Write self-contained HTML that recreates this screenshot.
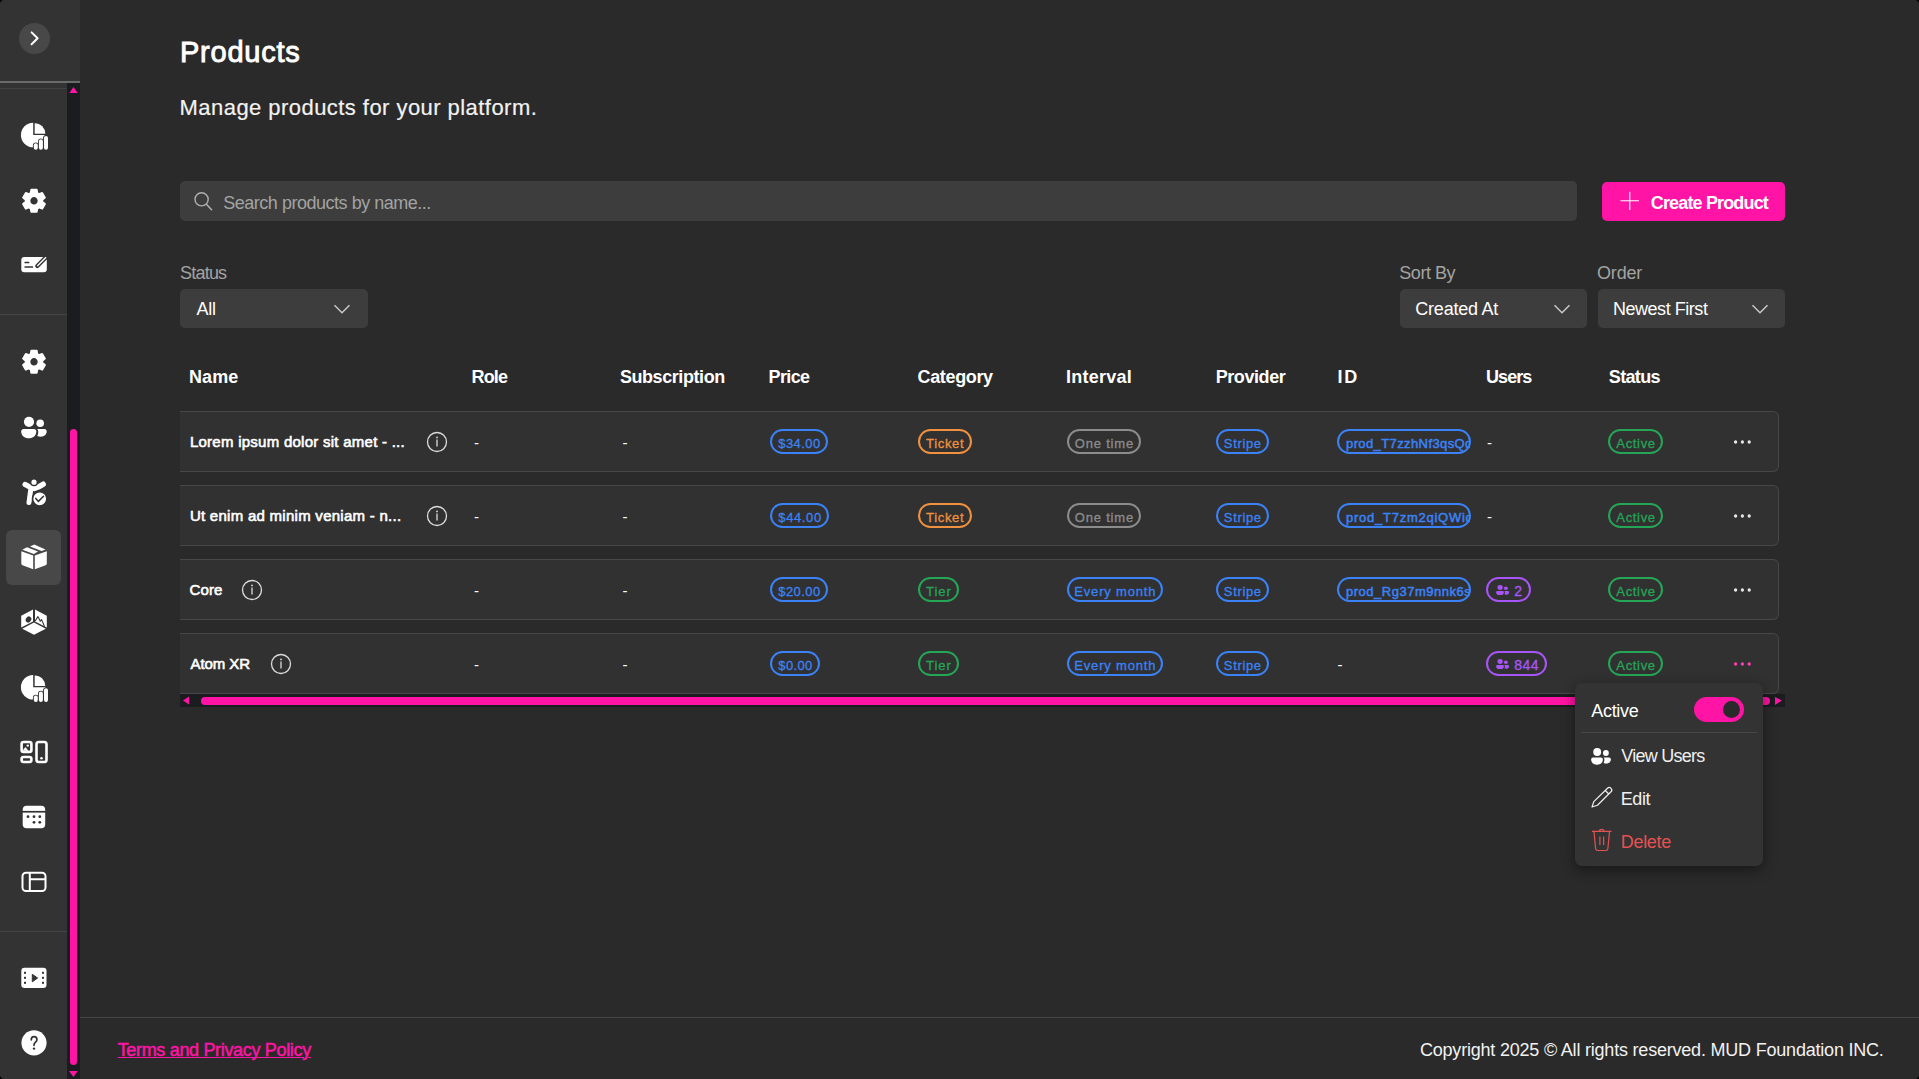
<!DOCTYPE html>
<html><head><meta charset="utf-8"><title>Products</title>
<style>
html,body{margin:0;padding:0;width:1919px;height:1079px;overflow:hidden;background:#2a2a2a;}
body{position:relative;font-family:"Liberation Sans", sans-serif;}
.t{position:absolute;white-space:nowrap;}
</style></head><body>
<div style="position:absolute;left:0px;top:0px;width:80px;height:1079px;background:#333333"></div>
<div style="position:absolute;left:80px;top:1016.5px;width:1839px;height:1px;background:#444"></div>
<div style="position:absolute;left:0px;top:81px;width:80px;height:2px;background:#6b6b6b"></div>
<div style="position:absolute;left:0px;top:88px;width:67px;height:1px;background:#444"></div>
<div style="position:absolute;left:0px;top:314px;width:67px;height:1px;background:#444"></div>
<div style="position:absolute;left:0px;top:931px;width:67px;height:1px;background:#444"></div>
<div style="position:absolute;left:67px;top:83px;width:13px;height:996px;background:#1b1c1f"></div>
<div style="position:absolute;left:70px;top:428.5px;width:7px;height:636px;background:#ff14a5;border-radius:3.5px"></div>
<div style="position:absolute;left:6px;top:530px;width:55px;height:55px;background:#484848;border-radius:6px"></div>
<div style="position:absolute;left:19px;top:23px;width:31px;height:31px;background:#484848;border-radius:50%"></div>
<svg style="position:absolute;left:0;top:0" width="80" height="1079" viewBox="0 0 80 1079"><path d="M31.6,32.4 L37.6,38.3 L31.6,44.2" fill="none" stroke="#fff" stroke-width="2" stroke-linecap="round" stroke-linejoin="round"/><path d="M73.5,86.9 L77.7,92.9 L69.4,92.9 Z" fill="#ff14a5"/><path d="M69,1070.9 L77.8,1070.9 L73.4,1077.1 Z" fill="#ff14a5"/><path d="M33.2,122.7 A12.3,12.3 0 1 0 45.5,135 L33.2,135 Z" fill="#fff"/><path d="M34.7,123.20000000000002 A10.6,10.6 0 0 1 45.300000000000004,133.8 L34.7,133.8 Z" fill="#fff"/><rect x="33.8" y="143.3" width="4" height="6.5" rx="2" fill="#fff" stroke="#333333" stroke-width="1.8" paint-order="stroke"/><rect x="38.9" y="139.3" width="4" height="10.5" rx="2" fill="#fff" stroke="#333333" stroke-width="1.8" paint-order="stroke"/><rect x="44" y="136" width="4" height="13.8" rx="2" fill="#fff" stroke="#333333" stroke-width="1.8" paint-order="stroke"/><path fill-rule="evenodd" d="M29.80,193.53 L30.72,193.07 L31.24,189.74 L36.76,189.74 L37.28,193.07 L38.20,193.53 L38.20,193.53 L39.06,194.09 L42.20,192.88 L44.96,197.66 L42.34,199.78 L42.40,200.80 L42.40,200.80 L42.34,201.82 L44.96,203.94 L42.20,208.72 L39.06,207.51 L38.20,208.07 L38.20,208.07 L37.28,208.53 L36.76,211.86 L31.24,211.86 L30.72,208.53 L29.80,208.07 L29.80,208.07 L28.94,207.51 L25.80,208.72 L23.04,203.94 L25.66,201.82 L25.60,200.80 L25.60,200.80 L25.66,199.78 L23.04,197.66 L25.80,192.88 L28.94,194.09 L29.80,193.53 Z M38.60,200.80 A4.6,4.6 0 1 0 29.40,200.80 A4.6,4.6 0 1 0 38.60,200.80 Z" fill="#fff" stroke="#fff" stroke-width="1.8" stroke-linejoin="round"/><rect x="21.3" y="257" width="25.5" height="15.3" rx="3" fill="#fff"/><path d="M25.2,262.5 H28.6 M25.2,267 H32.4" stroke="#333333" stroke-width="1.7" stroke-linecap="round"/><path d="M37.3,265.9 L46,257.3" stroke="#333333" stroke-width="4.2" stroke-linecap="round"/><path d="M37.3,265.9 L46,257.3" stroke="#fff" stroke-width="1.4" stroke-linecap="butt"/><path fill-rule="evenodd" d="M29.80,354.53 L30.72,354.07 L31.24,350.74 L36.76,350.74 L37.28,354.07 L38.20,354.53 L38.20,354.53 L39.06,355.09 L42.20,353.88 L44.96,358.66 L42.34,360.78 L42.40,361.80 L42.40,361.80 L42.34,362.82 L44.96,364.94 L42.20,369.72 L39.06,368.51 L38.20,369.07 L38.20,369.07 L37.28,369.53 L36.76,372.86 L31.24,372.86 L30.72,369.53 L29.80,369.07 L29.80,369.07 L28.94,368.51 L25.80,369.72 L23.04,364.94 L25.66,362.82 L25.60,361.80 L25.60,361.80 L25.66,360.78 L23.04,358.66 L25.80,353.88 L28.94,355.09 L29.80,354.53 Z M38.60,361.80 A4.6,4.6 0 1 0 29.40,361.80 A4.6,4.6 0 1 0 38.60,361.80 Z" fill="#fff" stroke="#fff" stroke-width="1.8" stroke-linejoin="round"/><g transform="translate(21,416.5) scale(1.0)" fill="#fff"><circle cx="8" cy="5.3" r="5.1"/><circle cx="19.2" cy="6.7" r="3.8"/><path d="M0.2,15 Q0.2,12.5 2.7,12.5 H12.8 Q15.3,12.5 15.3,15 C15.3,19 12,21.8 7.75,21.8 C3.5,21.8 0.2,19 0.2,15 Z"/><path d="M16.2,12.5 H23.2 Q25.7,12.5 25.7,15 C25.7,18 23,20.2 20,20.2 C18.5,20.2 17.3,19.9 16.3,19.4 Q17.3,17.5 17.3,15.5 Q17.3,13.7 16.2,12.5 Z"/></g><path d="M25.2,484.5 Q30,487.5 34,488.5 Q38.5,487.5 43.2,484.2" fill="none" stroke="#fff" stroke-width="5.4" stroke-linecap="round"/><path d="M30.8,489 L29,502.5" fill="none" stroke="#fff" stroke-width="5" stroke-linecap="round"/><circle cx="34" cy="482.2" r="3.3" fill="#fff" stroke="#333333" stroke-width="1.4"/><circle cx="39.7" cy="498.8" r="7.2" fill="#fff" stroke="#333333" stroke-width="1.6"/><path d="M35.8,498.4 L38.4,501.4 L43.5,496.2" fill="none" stroke="#333333" stroke-width="1.5" stroke-linecap="round" stroke-linejoin="round"/><path d="M21.3,551.2 L33.2,555.4 L33.2,569.3 L22.5,565.2 Q21.3,564.6 21.3,563.4 Z" fill="#fff"/><path d="M34.8,555.4 L46.8,551.2 L46.8,563.4 Q46.8,564.6 45.6,565.2 L34.8,569.3 Z" fill="#fff"/><path d="M22.3,549.7 L27,547.2 L38,551.6 L33.8,554 Z" fill="#fff"/><path d="M30,546.6 L33.8,544.7 Q34.3,544.5 34.8,544.7 L45.5,549.6 L41.6,551.1 Z" fill="#fff"/><path d="M21.2,615.8 L33,609.6 L33,621.4 L21.2,627.4 Z" fill="#fff"/><path d="M35,609.6 L46.8,615.8 L46.8,627.4 L35,621.4 Z" fill="#fff"/><path d="M22.2,628.7 L34,622.6 L45.8,628.7 L34,634.8 Z" fill="#fff"/><ellipse cx="28.5" cy="619.5" rx="2.6" ry="3.2" transform="rotate(35 28.5 619.5)" fill="#333333"/><path d="M35.2,621 L37.9,616.6 L40.3,621.2 L41.6,619.6 L44.6,626.6" fill="none" stroke="#333333" stroke-width="1.1" stroke-linejoin="round"/><path d="M33.2,675.0 A12.3,12.3 0 1 0 45.5,687.3 L33.2,687.3 Z" fill="#fff"/><path d="M34.7,675.4999999999999 A10.6,10.6 0 0 1 45.300000000000004,686.0999999999999 L34.7,686.0999999999999 Z" fill="#fff"/><rect x="33.8" y="695.5999999999999" width="4" height="6.5" rx="2" fill="#fff" stroke="#333333" stroke-width="1.8" paint-order="stroke"/><rect x="38.9" y="691.5999999999999" width="4" height="10.5" rx="2" fill="#fff" stroke="#333333" stroke-width="1.8" paint-order="stroke"/><rect x="44" y="688.3" width="4" height="13.8" rx="2" fill="#fff" stroke="#333333" stroke-width="1.8" paint-order="stroke"/><rect x="21.6" y="742" width="9.8" height="9.9" rx="2" fill="none" stroke="#fff" stroke-width="2.6"/><path d="M22.5,750.5 L25.5,747 L28.5,751 Z" fill="#fff"/><circle cx="27.8" cy="745.6" r="1.2" fill="#fff"/><rect x="21.6" y="757" width="9.8" height="5" rx="2" fill="none" stroke="#fff" stroke-width="2.6"/><rect x="36.5" y="742" width="10" height="20" rx="2.2" fill="none" stroke="#fff" stroke-width="2.6"/><circle cx="41.5" cy="758.2" r="1.3" fill="#fff"/><rect x="22.7" y="805.7" width="22.5" height="22.6" rx="4" fill="#fff"/><rect x="22" y="810.9" width="24" height="1.7" fill="#333333"/><circle cx="28" cy="816.7" r="1.4" fill="#333333"/><circle cx="34" cy="816.7" r="1.4" fill="#333333"/><circle cx="39.8" cy="816.7" r="1.4" fill="#333333"/><circle cx="34" cy="822.3" r="1.4" fill="#333333"/><circle cx="39.8" cy="822.3" r="1.4" fill="#333333"/><rect x="22.5" y="872.8" width="23" height="18.2" rx="3.5" fill="none" stroke="#fff" stroke-width="2"/><path d="M29.8,872.8 V891 M29.8,879.2 H45.5" stroke="#fff" stroke-width="2"/><rect x="21.3" y="967.8" width="25.2" height="20.2" rx="3.2" fill="#fff"/><rect x="24" y="971.8" width="2" height="2" fill="#333333"/><rect x="24" y="976.8" width="2" height="2" fill="#333333"/><rect x="24" y="981.8" width="2" height="2" fill="#333333"/><rect x="42" y="971.8" width="2" height="2" fill="#333333"/><rect x="42" y="976.8" width="2" height="2" fill="#333333"/><rect x="42" y="981.8" width="2" height="2" fill="#333333"/><path d="M32.3,974.3 L37.6,978 L32.3,981.8 Z" fill="#333333" stroke="#333333" stroke-width="1" stroke-linejoin="round"/><circle cx="34" cy="1042.8" r="12.6" fill="#fff"/><path d="M31.3,1039.8 Q31.3,1036.6 34,1036.6 Q36.9,1036.6 36.9,1039.4 Q36.9,1041 35.3,1042.3 Q34,1043.4 34,1045.3" fill="none" stroke="#333333" stroke-width="1.7" stroke-linecap="round"/><circle cx="34" cy="1048.6" r="1.2" fill="#333333"/></svg>
<div class="t" style="left:180.00px;top:38.25px;font-size:29px;line-height:29px;-webkit-text-stroke:0.9px #ffffff;color:#ffffff;letter-spacing:0.764px;">Products</div>
<div class="t" style="left:179.55px;top:96.68px;font-size:22px;line-height:22px;-webkit-text-stroke:0.2px #f2f2f2;color:#f2f2f2;letter-spacing:0.450px;">Manage products for your platform.</div>
<div style="position:absolute;left:180px;top:181px;width:1397px;height:40px;background:#3d3d3d;border-radius:5px"></div>
<svg style="position:absolute;left:190px;top:188px" width="26" height="26" viewBox="0 0 26 26"><circle cx="11.6" cy="11.3" r="6.6" fill="none" stroke="#b0b0b0" stroke-width="1.4"/><path d="M16.4,16.2 L21.6,21.7" stroke="#b0b0b0" stroke-width="1.5" stroke-linecap="round"/></svg>
<div class="t" style="left:223.25px;top:193.86px;font-size:18px;line-height:18px;color:#a3a3a3;letter-spacing:-0.480px;">Search products by name...</div>
<div style="position:absolute;left:1602px;top:182px;width:183px;height:39px;background:#ff14a5;border-radius:5px"></div>
<svg style="position:absolute;left:1618px;top:190px" width="24" height="24" viewBox="0 0 24 24"><path d="M11.8,1.7 V19.9 M2.5,10.8 H21" stroke="#fff" stroke-width="1.1"/></svg>
<div class="t" style="left:1650.80px;top:193.66px;font-size:18px;line-height:18px;font-weight:700;color:#ffffff;letter-spacing:-0.846px;">Create Product</div>
<div class="t" style="left:179.95px;top:263.76px;font-size:18px;line-height:18px;color:#a3a3a3;letter-spacing:-0.770px;">Status</div>
<div class="t" style="left:1399.35px;top:263.76px;font-size:18px;line-height:18px;color:#a3a3a3;letter-spacing:-0.475px;">Sort By</div>
<div class="t" style="left:1597.05px;top:263.76px;font-size:18px;line-height:18px;color:#a3a3a3;letter-spacing:-0.200px;">Order</div>
<div style="position:absolute;left:180px;top:289px;width:188px;height:39px;background:#3d3d3d;border-radius:5px"></div>
<div class="t" style="left:196.40px;top:300.16px;font-size:18px;line-height:18px;color:#ffffff;letter-spacing:-0.150px;">All</div>
<svg style="position:absolute;left:332.5px;top:300px" width="20" height="20" viewBox="0 0 20 20"><path d="M1.5,5.2 L9,12.8 L16.5,5.2" fill="none" stroke="#c8c8c8" stroke-width="1.5"/></svg>
<div style="position:absolute;left:1400px;top:289px;width:187px;height:39px;background:#3d3d3d;border-radius:5px"></div>
<div class="t" style="left:1415.35px;top:300.16px;font-size:18px;line-height:18px;color:#ffffff;letter-spacing:-0.239px;">Created At</div>
<svg style="position:absolute;left:1553px;top:300px" width="20" height="20" viewBox="0 0 20 20"><path d="M1.5,5.2 L9,12.8 L16.5,5.2" fill="none" stroke="#c8c8c8" stroke-width="1.5"/></svg>
<div style="position:absolute;left:1598px;top:289px;width:187px;height:39px;background:#3d3d3d;border-radius:5px"></div>
<div class="t" style="left:1612.95px;top:300.16px;font-size:18px;line-height:18px;color:#ffffff;letter-spacing:-0.459px;">Newest First</div>
<svg style="position:absolute;left:1751px;top:300px" width="20" height="20" viewBox="0 0 20 20"><path d="M1.5,5.2 L9,12.8 L16.5,5.2" fill="none" stroke="#c8c8c8" stroke-width="1.5"/></svg>
<div class="t" style="left:189.00px;top:367.86px;font-size:18px;line-height:18px;font-weight:700;color:#ffffff;letter-spacing:0.100px;">Name</div>
<div class="t" style="left:471.50px;top:367.86px;font-size:18px;line-height:18px;font-weight:700;color:#ffffff;letter-spacing:-0.833px;">Role</div>
<div class="t" style="left:619.90px;top:367.86px;font-size:18px;line-height:18px;font-weight:700;color:#ffffff;letter-spacing:-0.427px;">Subscription</div>
<div class="t" style="left:768.60px;top:367.86px;font-size:18px;line-height:18px;font-weight:700;color:#ffffff;letter-spacing:-0.625px;">Price</div>
<div class="t" style="left:917.50px;top:367.86px;font-size:18px;line-height:18px;font-weight:700;color:#ffffff;letter-spacing:-0.343px;">Category</div>
<div class="t" style="left:1066.10px;top:367.86px;font-size:18px;line-height:18px;font-weight:700;color:#ffffff;letter-spacing:0.221px;">Interval</div>
<div class="t" style="left:1215.70px;top:367.86px;font-size:18px;line-height:18px;font-weight:700;color:#ffffff;letter-spacing:-0.421px;">Provider</div>
<div class="t" style="left:1337.50px;top:367.86px;font-size:18px;line-height:18px;font-weight:700;color:#ffffff;letter-spacing:1.850px;">ID</div>
<div class="t" style="left:1486.10px;top:367.86px;font-size:18px;line-height:18px;font-weight:700;color:#ffffff;letter-spacing:-0.975px;">Users</div>
<div class="t" style="left:1608.80px;top:367.86px;font-size:18px;line-height:18px;font-weight:700;color:#ffffff;letter-spacing:-0.660px;">Status</div>
<div style="position:absolute;left:180px;top:411px;width:1598px;height:59px;background:#313131;border-top:1px solid #474747;border-bottom:1px solid #474747;border-right:1px solid #474747;border-radius:0 6px 6px 0"></div>
<div class="t" style="left:189.90px;top:434.10px;font-size:15px;line-height:15px;-webkit-text-stroke:0.6px #ffffff;color:#ffffff;letter-spacing:0.261px;">Lorem ipsum dolor sit amet - ...</div>
<svg style="position:absolute;left:426.2px;top:430.5px" width="22" height="22" viewBox="0 0 22 22"><circle cx="11" cy="11" r="9.5" fill="none" stroke="#dcdcdc" stroke-width="1.3"/><path d="M11,8.6 V15.6" stroke="#dcdcdc" stroke-width="1.3"/><circle cx="11" cy="6.4" r="0.9" fill="#dcdcdc"/></svg>
<div class="t" style="left:474.00px;top:434.90px;font-size:15px;line-height:15px;color:#ffffff;letter-spacing:0.000px;">-</div>
<div class="t" style="left:622.50px;top:434.90px;font-size:15px;line-height:15px;color:#ffffff;letter-spacing:0.000px;">-</div>
<div style="position:absolute;left:180px;top:485px;width:1598px;height:59px;background:#313131;border-top:1px solid #474747;border-bottom:1px solid #474747;border-right:1px solid #474747;border-radius:0 6px 6px 0"></div>
<div class="t" style="left:189.90px;top:508.10px;font-size:15px;line-height:15px;-webkit-text-stroke:0.6px #ffffff;color:#ffffff;letter-spacing:0.271px;">Ut enim ad minim veniam - n...</div>
<svg style="position:absolute;left:426.2px;top:504.5px" width="22" height="22" viewBox="0 0 22 22"><circle cx="11" cy="11" r="9.5" fill="none" stroke="#dcdcdc" stroke-width="1.3"/><path d="M11,8.6 V15.6" stroke="#dcdcdc" stroke-width="1.3"/><circle cx="11" cy="6.4" r="0.9" fill="#dcdcdc"/></svg>
<div class="t" style="left:474.00px;top:508.90px;font-size:15px;line-height:15px;color:#ffffff;letter-spacing:0.000px;">-</div>
<div class="t" style="left:622.50px;top:508.90px;font-size:15px;line-height:15px;color:#ffffff;letter-spacing:0.000px;">-</div>
<div style="position:absolute;left:180px;top:559px;width:1598px;height:59px;background:#313131;border-top:1px solid #474747;border-bottom:1px solid #474747;border-right:1px solid #474747;border-radius:0 6px 6px 0"></div>
<div class="t" style="left:189.55px;top:582.10px;font-size:15px;line-height:15px;-webkit-text-stroke:0.6px #ffffff;color:#ffffff;letter-spacing:0.083px;">Core</div>
<svg style="position:absolute;left:240.5px;top:578.5px" width="22" height="22" viewBox="0 0 22 22"><circle cx="11" cy="11" r="9.5" fill="none" stroke="#dcdcdc" stroke-width="1.3"/><path d="M11,8.6 V15.6" stroke="#dcdcdc" stroke-width="1.3"/><circle cx="11" cy="6.4" r="0.9" fill="#dcdcdc"/></svg>
<div class="t" style="left:474.00px;top:582.90px;font-size:15px;line-height:15px;color:#ffffff;letter-spacing:0.000px;">-</div>
<div class="t" style="left:622.50px;top:582.90px;font-size:15px;line-height:15px;color:#ffffff;letter-spacing:0.000px;">-</div>
<div style="position:absolute;left:180px;top:633px;width:1598px;height:59px;background:#313131;border-top:1px solid #474747;border-bottom:1px solid #474747;border-right:1px solid #474747;border-radius:0 6px 6px 0"></div>
<div class="t" style="left:190.50px;top:656.10px;font-size:15px;line-height:15px;-webkit-text-stroke:0.6px #ffffff;color:#ffffff;letter-spacing:-0.067px;">Atom XR</div>
<svg style="position:absolute;left:269.5px;top:652.5px" width="22" height="22" viewBox="0 0 22 22"><circle cx="11" cy="11" r="9.5" fill="none" stroke="#dcdcdc" stroke-width="1.3"/><path d="M11,8.6 V15.6" stroke="#dcdcdc" stroke-width="1.3"/><circle cx="11" cy="6.4" r="0.9" fill="#dcdcdc"/></svg>
<div class="t" style="left:474.00px;top:656.90px;font-size:15px;line-height:15px;color:#ffffff;letter-spacing:0.000px;">-</div>
<div class="t" style="left:622.50px;top:656.90px;font-size:15px;line-height:15px;color:#ffffff;letter-spacing:0.000px;">-</div>
<div style="position:absolute;left:770px;top:429px;width:54px;height:21px;border:2px solid #3b82f6;border-radius:13px"></div>
<div class="t" style="left:778.35px;top:436.90px;font-size:13px;line-height:13px;-webkit-text-stroke:0.3px #3b82f6;color:#3b82f6;letter-spacing:0.410px;">$34.00</div>
<div style="position:absolute;left:918px;top:429px;width:50px;height:21px;border:2px solid #f0913f;border-radius:13px"></div>
<div class="t" style="left:926.10px;top:436.90px;font-size:13px;line-height:13px;-webkit-text-stroke:0.3px #f0913f;color:#f0913f;letter-spacing:0.660px;">Ticket</div>
<div style="position:absolute;left:1067px;top:429px;width:70px;height:21px;border:2px solid #8c8c8c;border-radius:13px"></div>
<div class="t" style="left:1074.85px;top:436.90px;font-size:13px;line-height:13px;-webkit-text-stroke:0.3px #8c8c8c;color:#8c8c8c;letter-spacing:0.793px;">One time</div>
<div style="position:absolute;left:1216px;top:429px;width:49px;height:21px;border:2px solid #3b82f6;border-radius:13px"></div>
<div class="t" style="left:1223.85px;top:436.90px;font-size:13px;line-height:13px;-webkit-text-stroke:0.3px #3b82f6;color:#3b82f6;letter-spacing:0.660px;">Stripe</div>
<div style="position:absolute;left:1337px;top:429px;width:130px;height:21px;border:2px solid #3b82f6;border-radius:13px"></div>
<div style="position:absolute;left:1339px;top:429px;width:131px;height:25px;overflow:hidden"><div class="t" style="left:7.00px;top:7.60px;font-size:13px;line-height:13px;-webkit-text-stroke:0.5px #3b82f6;color:#3b82f6;letter-spacing:0.397px">prod_T7zzhNf3qsQd</div></div>
<div class="t" style="left:1487.00px;top:435.20px;font-size:15px;line-height:15px;color:#ffffff;letter-spacing:0.000px;">-</div>
<div style="position:absolute;left:1608px;top:429px;width:51px;height:21px;border:2px solid #25a556;border-radius:13px"></div>
<div class="t" style="left:1616.35px;top:436.90px;font-size:13px;line-height:13px;-webkit-text-stroke:0.3px #25a556;color:#25a556;letter-spacing:0.660px;">Active</div>
<svg style="position:absolute;left:1730px;top:437.5px" width="24" height="8" viewBox="0 0 24 8"><circle cx="5.6" cy="4" r="1.65" fill="#e8e8e8"/><circle cx="12.4" cy="4" r="1.65" fill="#e8e8e8"/><circle cx="19.2" cy="4" r="1.65" fill="#e8e8e8"/></svg>
<div style="position:absolute;left:770px;top:503px;width:55px;height:21px;border:2px solid #3b82f6;border-radius:13px"></div>
<div class="t" style="left:778.35px;top:510.90px;font-size:13px;line-height:13px;-webkit-text-stroke:0.3px #3b82f6;color:#3b82f6;letter-spacing:0.610px;">$44.00</div>
<div style="position:absolute;left:918px;top:503px;width:50px;height:21px;border:2px solid #f0913f;border-radius:13px"></div>
<div class="t" style="left:926.10px;top:510.90px;font-size:13px;line-height:13px;-webkit-text-stroke:0.3px #f0913f;color:#f0913f;letter-spacing:0.660px;">Ticket</div>
<div style="position:absolute;left:1067px;top:503px;width:70px;height:21px;border:2px solid #8c8c8c;border-radius:13px"></div>
<div class="t" style="left:1074.85px;top:510.90px;font-size:13px;line-height:13px;-webkit-text-stroke:0.3px #8c8c8c;color:#8c8c8c;letter-spacing:0.793px;">One time</div>
<div style="position:absolute;left:1216px;top:503px;width:49px;height:21px;border:2px solid #3b82f6;border-radius:13px"></div>
<div class="t" style="left:1223.85px;top:510.90px;font-size:13px;line-height:13px;-webkit-text-stroke:0.3px #3b82f6;color:#3b82f6;letter-spacing:0.660px;">Stripe</div>
<div style="position:absolute;left:1337px;top:503px;width:130px;height:21px;border:2px solid #3b82f6;border-radius:13px"></div>
<div style="position:absolute;left:1339px;top:503px;width:131px;height:25px;overflow:hidden"><div class="t" style="left:7.00px;top:7.60px;font-size:13px;line-height:13px;-webkit-text-stroke:0.5px #3b82f6;color:#3b82f6;letter-spacing:0.750px">prod_T7zm2qiQWid</div></div>
<div class="t" style="left:1487.00px;top:509.20px;font-size:15px;line-height:15px;color:#ffffff;letter-spacing:0.000px;">-</div>
<div style="position:absolute;left:1608px;top:503px;width:51px;height:21px;border:2px solid #25a556;border-radius:13px"></div>
<div class="t" style="left:1616.35px;top:510.90px;font-size:13px;line-height:13px;-webkit-text-stroke:0.3px #25a556;color:#25a556;letter-spacing:0.660px;">Active</div>
<svg style="position:absolute;left:1730px;top:511.5px" width="24" height="8" viewBox="0 0 24 8"><circle cx="5.6" cy="4" r="1.65" fill="#e8e8e8"/><circle cx="12.4" cy="4" r="1.65" fill="#e8e8e8"/><circle cx="19.2" cy="4" r="1.65" fill="#e8e8e8"/></svg>
<div style="position:absolute;left:770px;top:577px;width:54px;height:21px;border:2px solid #3b82f6;border-radius:13px"></div>
<div class="t" style="left:778.35px;top:584.90px;font-size:13px;line-height:13px;-webkit-text-stroke:0.3px #3b82f6;color:#3b82f6;letter-spacing:0.410px;">$20.00</div>
<div style="position:absolute;left:918px;top:577px;width:37px;height:21px;border:2px solid #25a556;border-radius:13px"></div>
<div class="t" style="left:926.10px;top:584.90px;font-size:13px;line-height:13px;-webkit-text-stroke:0.3px #25a556;color:#25a556;letter-spacing:0.933px;">Tier</div>
<div style="position:absolute;left:1067px;top:577px;width:92px;height:21px;border:2px solid #3b82f6;border-radius:13px"></div>
<div class="t" style="left:1074.35px;top:584.90px;font-size:13px;line-height:13px;-webkit-text-stroke:0.3px #3b82f6;color:#3b82f6;letter-spacing:0.805px;">Every month</div>
<div style="position:absolute;left:1216px;top:577px;width:49px;height:21px;border:2px solid #3b82f6;border-radius:13px"></div>
<div class="t" style="left:1223.85px;top:584.90px;font-size:13px;line-height:13px;-webkit-text-stroke:0.3px #3b82f6;color:#3b82f6;letter-spacing:0.660px;">Stripe</div>
<div style="position:absolute;left:1337px;top:577px;width:130px;height:21px;border:2px solid #3b82f6;border-radius:13px"></div>
<div style="position:absolute;left:1339px;top:577px;width:131px;height:25px;overflow:hidden"><div class="t" style="left:7.00px;top:7.60px;font-size:13px;line-height:13px;-webkit-text-stroke:0.5px #3b82f6;color:#3b82f6;letter-spacing:0.518px">prod_Rg37m9nnk6s</div></div>
<div style="position:absolute;left:1486px;top:577px;width:41px;height:21px;border:2px solid #a855f7;border-radius:13px"></div>
<svg style="position:absolute;left:1495.6px;top:584.6px" width="13.4" height="10.6" viewBox="0 0 26 22" preserveAspectRatio="none"><g transform="translate(0,0) scale(1)" fill="#a855f7"><circle cx="8" cy="5.3" r="5.1"/><circle cx="19.2" cy="6.7" r="3.8"/><path d="M0.2,15 Q0.2,12.5 2.7,12.5 H12.8 Q15.3,12.5 15.3,15 C15.3,19 12,21.8 7.75,21.8 C3.5,21.8 0.2,19 0.2,15 Z"/><path d="M16.2,12.5 H23.2 Q25.7,12.5 25.7,15 C25.7,18 23,20.2 20,20.2 C18.5,20.2 17.3,19.9 16.3,19.4 Q17.3,17.5 17.3,15.5 Q17.3,13.7 16.2,12.5 Z"/></g></svg>
<div class="t" style="left:1514.35px;top:584.35px;font-size:14px;line-height:14px;-webkit-text-stroke:0.3px #a855f7;color:#a855f7;letter-spacing:-0.150px;">2</div>
<div style="position:absolute;left:1608px;top:577px;width:51px;height:21px;border:2px solid #25a556;border-radius:13px"></div>
<div class="t" style="left:1616.35px;top:584.90px;font-size:13px;line-height:13px;-webkit-text-stroke:0.3px #25a556;color:#25a556;letter-spacing:0.660px;">Active</div>
<svg style="position:absolute;left:1730px;top:585.5px" width="24" height="8" viewBox="0 0 24 8"><circle cx="5.6" cy="4" r="1.65" fill="#e8e8e8"/><circle cx="12.4" cy="4" r="1.65" fill="#e8e8e8"/><circle cx="19.2" cy="4" r="1.65" fill="#e8e8e8"/></svg>
<div style="position:absolute;left:770px;top:651px;width:46px;height:21px;border:2px solid #3b82f6;border-radius:13px"></div>
<div class="t" style="left:778.35px;top:658.90px;font-size:13px;line-height:13px;-webkit-text-stroke:0.3px #3b82f6;color:#3b82f6;letter-spacing:0.325px;">$0.00</div>
<div style="position:absolute;left:918px;top:651px;width:37px;height:21px;border:2px solid #25a556;border-radius:13px"></div>
<div class="t" style="left:926.10px;top:658.90px;font-size:13px;line-height:13px;-webkit-text-stroke:0.3px #25a556;color:#25a556;letter-spacing:0.933px;">Tier</div>
<div style="position:absolute;left:1067px;top:651px;width:92px;height:21px;border:2px solid #3b82f6;border-radius:13px"></div>
<div class="t" style="left:1074.35px;top:658.90px;font-size:13px;line-height:13px;-webkit-text-stroke:0.3px #3b82f6;color:#3b82f6;letter-spacing:0.805px;">Every month</div>
<div style="position:absolute;left:1216px;top:651px;width:49px;height:21px;border:2px solid #3b82f6;border-radius:13px"></div>
<div class="t" style="left:1223.85px;top:658.90px;font-size:13px;line-height:13px;-webkit-text-stroke:0.3px #3b82f6;color:#3b82f6;letter-spacing:0.660px;">Stripe</div>
<div class="t" style="left:1337.50px;top:657.20px;font-size:15px;line-height:15px;color:#ffffff;letter-spacing:0.000px;">-</div>
<div style="position:absolute;left:1486px;top:651px;width:57px;height:21px;border:2px solid #a855f7;border-radius:13px"></div>
<svg style="position:absolute;left:1495.6px;top:658.6px" width="13.4" height="10.6" viewBox="0 0 26 22" preserveAspectRatio="none"><g transform="translate(0,0) scale(1)" fill="#a855f7"><circle cx="8" cy="5.3" r="5.1"/><circle cx="19.2" cy="6.7" r="3.8"/><path d="M0.2,15 Q0.2,12.5 2.7,12.5 H12.8 Q15.3,12.5 15.3,15 C15.3,19 12,21.8 7.75,21.8 C3.5,21.8 0.2,19 0.2,15 Z"/><path d="M16.2,12.5 H23.2 Q25.7,12.5 25.7,15 C25.7,18 23,20.2 20,20.2 C18.5,20.2 17.3,19.9 16.3,19.4 Q17.3,17.5 17.3,15.5 Q17.3,13.7 16.2,12.5 Z"/></g></svg>
<div class="t" style="left:1514.35px;top:658.35px;font-size:14px;line-height:14px;-webkit-text-stroke:0.3px #a855f7;color:#a855f7;letter-spacing:0.400px;">844</div>
<div style="position:absolute;left:1608px;top:651px;width:51px;height:21px;border:2px solid #25a556;border-radius:13px"></div>
<div class="t" style="left:1616.35px;top:658.90px;font-size:13px;line-height:13px;-webkit-text-stroke:0.3px #25a556;color:#25a556;letter-spacing:0.660px;">Active</div>
<svg style="position:absolute;left:1730px;top:659.5px" width="24" height="8" viewBox="0 0 24 8"><circle cx="5.6" cy="4" r="1.65" fill="#ff3fb5"/><circle cx="12.4" cy="4" r="1.65" fill="#ff3fb5"/><circle cx="19.2" cy="4" r="1.65" fill="#ff3fb5"/></svg>
<div style="position:absolute;left:180px;top:694px;width:1605px;height:13px;background:#1b1c1f"></div>
<div style="position:absolute;left:201px;top:697px;width:1569px;height:7.5px;background:#ff14a5;border-radius:4px"></div>
<svg style="position:absolute;left:180px;top:694px" width="1605" height="13"><path d="M3,6.5 L9,2.5 L9,10.5 Z" fill="#ff14a5"/><path d="M1602,6.5 L1595,3 L1595,11 Z" fill="#ff14a5"/></svg>
<div style="position:absolute;left:1575px;top:683px;width:188px;height:183px;background:#333333;border-radius:7px;box-shadow:0 4px 14px rgba(0,0,0,0.45)"></div>
<div class="t" style="left:1591.30px;top:701.76px;font-size:18px;line-height:18px;color:#ffffff;letter-spacing:-0.310px;">Active</div>
<div style="position:absolute;left:1694px;top:697px;width:50px;height:25px;background:#ff14a5;border-radius:13px"></div>
<div style="position:absolute;left:1722.5px;top:700.5px;width:17.5px;height:17.5px;background:#2a2a2a;border-radius:50%"></div>
<div style="position:absolute;left:1581px;top:732px;width:176px;height:1px;background:#474747"></div>
<svg style="position:absolute;left:1590.5px;top:746.8px" width="24" height="22" viewBox="0 0 26 22"><g transform="translate(0,0) scale(0.84)" fill="#fff"><circle cx="8" cy="5.3" r="5.1"/><circle cx="19.2" cy="6.7" r="3.8"/><path d="M0.2,15 Q0.2,12.5 2.7,12.5 H12.8 Q15.3,12.5 15.3,15 C15.3,19 12,21.8 7.75,21.8 C3.5,21.8 0.2,19 0.2,15 Z"/><path d="M16.2,12.5 H23.2 Q25.7,12.5 25.7,15 C25.7,18 23,20.2 20,20.2 C18.5,20.2 17.3,19.9 16.3,19.4 Q17.3,17.5 17.3,15.5 Q17.3,13.7 16.2,12.5 Z"/></g></svg>
<div class="t" style="left:1621.30px;top:747.26px;font-size:18px;line-height:18px;color:#f0f0f0;letter-spacing:-0.750px;">View Users</div>
<svg style="position:absolute;left:1588px;top:785px" width="26" height="26" viewBox="0 0 26 26"><path d="M19.5,3.3 Q21.3,1.6 23,3.3 Q24.7,5 23,6.8 L9.5,20.2 L4,22 L5.8,16.6 Z M17.3,5.5 L20.8,9" fill="none" stroke="#f0f0f0" stroke-width="1.2" stroke-linejoin="round"/></svg>
<div class="t" style="left:1620.65px;top:789.66px;font-size:18px;line-height:18px;color:#f0f0f0;letter-spacing:-0.350px;">Edit</div>
<svg style="position:absolute;left:1588px;top:827px" width="26" height="26" viewBox="0 0 26 26"><path d="M4,4.4 H23.5 M6,4.6 L7.6,21.5 Q7.8,23.5 9.8,23.5 H17.7 Q19.7,23.5 19.9,21.5 L21.5,4.6 M11.5,4.2 Q11.5,2.3 13.7,2.3 Q15.9,2.3 15.9,4.2 M11.9,9.5 V18 M15.6,9.5 V18" fill="none" stroke="#e35252" stroke-width="1.2" stroke-linejoin="round"/></svg>
<div class="t" style="left:1620.85px;top:832.76px;font-size:18px;line-height:18px;color:#e35252;letter-spacing:-0.340px;">Delete</div>
<div class="t" style="left:117.67px;top:1040.96px;font-size:18px;line-height:18px;-webkit-text-stroke:0.45px #ff14a5;color:#ff14a5;letter-spacing:-0.326px;text-decoration:underline;text-underline-offset:1.2px;text-decoration-thickness:1px">Terms and Privacy Policy</div>
<div class="t" style="left:1419.95px;top:1040.76px;font-size:18px;line-height:18px;color:#f2f2f2;letter-spacing:-0.206px;">Copyright 2025 © All rights reserved. MUD Foundation INC.</div>
<div style="position:absolute;left:0;top:0;width:3px;height:3px;background:radial-gradient(circle at 100% 100%, transparent 2.2px, #000 3px)"></div>
<div style="position:absolute;right:0;top:0;width:3px;height:3px;background:radial-gradient(circle at 0 100%, transparent 2.2px, #000 3px)"></div>
<div style="position:absolute;left:0;bottom:0;width:3px;height:3px;background:radial-gradient(circle at 100% 0, transparent 2.2px, #000 3px)"></div>
<div style="position:absolute;right:0;bottom:0;width:3px;height:3px;background:radial-gradient(circle at 0 0, transparent 2.2px, #000 3px)"></div>
</body></html>
